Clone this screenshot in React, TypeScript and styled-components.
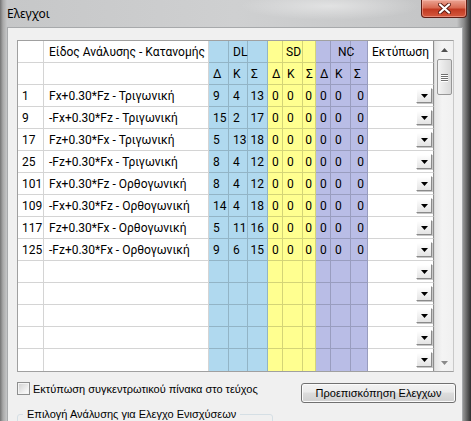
import React from 'react';
import styled, { createGlobalStyle } from 'styled-components';

const GlobalStyle = createGlobalStyle`
  html, body {
    margin: 0;
    padding: 0;
    overflow: hidden;
  }
  * {
    box-sizing: border-box;
  }
`;

const titleFont = `"Noto Sans", "Open Sans", sans-serif`;
const gridFont = `Roboto, "Noto Sans", sans-serif`;
const smallFont = `"Liberation Sans", Arial, sans-serif`;

const fills: Record<string, string> = {
  dl: '#b0d9ef',
  sd: '#ffff90',
  nc: '#b9bde6',
};

const Window = styled.div`
  width: 471px;
  height: 421px;
  display: flex;
  flex-direction: column;
  overflow: hidden;
  background:
    radial-gradient(ellipse 90px 14px at 330px 6px, rgba(255, 255, 255, 0.45), rgba(255, 255, 255, 0)),
    linear-gradient(90deg, #747474 0, #a9a9a9 3px, #c6c7c8 7px, #cfd0d1 50%, #c3c4c5 97%, #8a8a8a 98.5%, #2e2e2e 100%);
`;

const TitleBar = styled.div`
  height: 27px;
  display: flex;
  justify-content: space-between;
  align-items: flex-start;
  padding-left: 7px;
`;

const Title = styled.span`
  font-family: ${titleFont};
  font-size: 12px;
  line-height: 27px;
  color: #000;
`;

const CloseButton = styled.div`
  width: 46px;
  height: 18px;
  margin-right: 4px;
  display: flex;
  align-items: center;
  justify-content: center;
  border: 1px solid #5e1d14;
  border-top: none;
  border-radius: 0 0 4px 4px;
  background: linear-gradient(#eba493 0%, #d96b53 45%, #c23a22 55%, #d5593d 100%);
  box-shadow: inset 0 0 0 1px rgba(255, 200, 190, 0.45);
`;

const Client = styled.div`
  flex: 1;
  margin: 0 8px 0 7px;
  background: #f0f0f0;
  border: 1px solid #a7a9ab;
  border-bottom: none;
  padding: 12px 6px 0 9px;
  display: flex;
  flex-direction: column;
`;

const GridFrame = styled.div`
  display: flex;
  width: 437px;
  border: 1px solid #a0a0a0;
  border-right-color: #c9c9c9;
  background: #fff;
`;

const Table = styled.div`
  display: grid;
  grid-template-columns: 26px 165px 20px 19px 20px 15px 20px 13px 15px 20px 17px 66px;
  grid-auto-rows: 22px;
`;

const Cell = styled.div<{
  $fill?: string;
  $align?: 'left' | 'right';
  $pad?: number;
  $edge?: boolean;
  $last?: boolean;
  $raise?: boolean;
}>`
  position: relative;
  z-index: ${(p) => (p.$raise ? 1 : 'auto')};
  display: flex;
  align-items: center;
  justify-content: ${(p) => (p.$align === 'right' ? 'flex-end' : 'flex-start')};
  padding: 0 ${(p) => (p.$align === 'right' ? 3 : 0)}px 0 ${(p) => p.$pad ?? 4}px;
  background: ${(p) => (p.$fill ? fills[p.$fill] : '#fff')};
  border-right: 1px solid ${(p) => (p.$edge ? '#8e8e8e' : 'rgba(0, 0, 0, 0.17)')};
  border-bottom: ${(p) => (p.$last ? 'none' : '1px solid rgba(0, 0, 0, 0.17)')};
  font-family: ${gridFont};
  font-size: 12px;
  color: #000;
  white-space: nowrap;
`;

const DropButton = styled.div`
  position: absolute;
  right: 1px;
  top: 3px;
  width: 16px;
  height: 15px;
  display: flex;
  align-items: center;
  justify-content: center;
  background: linear-gradient(#ffffff, #e4e4e4);
  border: 1px solid;
  border-color: #ffffff #8a8a8a #8a8a8a #ffffff;
  box-shadow: 1px 1px 0 #c8c8c8;
`;

const ScrollBar = styled.div`
  width: 19px;
  display: flex;
  flex-direction: column;
  align-items: center;
  background: linear-gradient(90deg, #e6e6e6, #f4f4f4 40%, #f0f0f0);
  border-left: 1px solid #d9d9d9;
`;

const ArrowSlot = styled.div`
  height: 17px;
  width: 100%;
  display: flex;
  align-items: center;
  justify-content: center;
`;

const Thumb = styled.div`
  width: 15px;
  height: 36px;
  margin-top: 1px;
  display: flex;
  flex-direction: column;
  align-items: center;
  justify-content: center;
  gap: 1px;
  border: 1px solid #979797;
  border-radius: 2px;
  background: linear-gradient(90deg, #f4f4f4, #e6e6e6 50%, #d9d9d9);
`;

const Grip = styled.div`
  width: 7px;
  height: 1px;
  background: #6f6f6f;
  box-shadow: 0 1px 0 #fff;
`;

const Spacer = styled.div`
  flex: 1;
`;

const BottomRow = styled.div`
  display: flex;
  justify-content: space-between;
  align-items: flex-start;
  margin-top: 11px;
`;

const CheckLabel = styled.label`
  display: flex;
  align-items: center;
  gap: 3px;
  margin-top: -1px;
  font-family: ${smallFont};
  font-size: 11px;
  color: #000;
`;

const CheckBox = styled.span`
  width: 13px;
  height: 13px;
  border: 1px solid #8e8f8f;
  background: linear-gradient(135deg, #cfcfcf, #f2f2f2 70%, #ffffff);
  box-shadow: inset 0 0 0 1px #f4f4f4;
`;

const PreviewButton = styled.button`
  width: 155px;
  height: 20px;
  padding: 0;
  border: 1px solid #707070;
  border-radius: 3px;
  background: linear-gradient(#f2f2f2 0%, #ebebeb 45%, #dddddd 50%, #cfcfcf 100%);
  box-shadow: inset 0 0 0 1px #fbfbfb;
  font-family: ${smallFont};
  font-size: 11px;
  color: #000;
`;

const GroupBox = styled.fieldset`
  width: 256px;
  height: 40px;
  margin: 5px 0 0 0;
  padding: 0;
  border: 1px solid #d5dfe5;
  border-radius: 3px;
`;

const GroupCaption = styled.legend`
  margin-left: 5px;
  padding: 0 4px;
  font-family: ${smallFont};
  font-size: 11px;
  color: #000;
`;

type Row = [string, string, number[]];

const rows: Row[] = [
  ['1', 'Fx+0.30*Fz - Τριγωνική', [9, 4, 13, 0, 0, 0, 0, 0, 0]],
  ['9', '-Fx+0.30*Fz - Τριγωνική', [15, 2, 17, 0, 0, 0, 0, 0, 0]],
  ['17', 'Fz+0.30*Fx - Τριγωνική', [5, 13, 18, 0, 0, 0, 0, 0, 0]],
  ['25', '-Fz+0.30*Fx - Τριγωνική', [8, 4, 12, 0, 0, 0, 0, 0, 0]],
  ['101', 'Fx+0.30*Fz - Ορθογωνική', [8, 4, 12, 0, 0, 0, 0, 0, 0]],
  ['109', '-Fx+0.30*Fz - Ορθογωνική', [14, 4, 18, 0, 0, 0, 0, 0, 0]],
  ['117', 'Fz+0.30*Fx - Ορθογωνική', [5, 11, 16, 0, 0, 0, 0, 0, 0]],
  ['125', '-Fz+0.30*Fx - Ορθογωνική', [9, 6, 15, 0, 0, 0, 0, 0, 0]],
];

const groups = [
  { key: 'dl', label: 'DL', labelPad: 4 },
  { key: 'sd', label: 'SD', labelPad: 3 },
  { key: 'nc', label: 'NC', labelPad: 7 },
];

const subHeads = ['Δ', 'Κ', 'Σ'];

const DownTriangle = ({ color = '#000' }: { color?: string }) => (
  <svg width="7" height="4" viewBox="0 0 7 4">
    <path d="M0 0H7L3.5 4Z" fill={color} />
  </svg>
);

const UpTriangle = ({ color }: { color: string }) => (
  <svg width="7" height="4" viewBox="0 0 7 4">
    <path d="M0 4H7L3.5 0Z" fill={color} />
  </svg>
);

const CloseGlyph = () => (
  <svg width="13" height="11" viewBox="0 0 13 11">
    <path d="M2 1.5L11 9.5M11 1.5L2 9.5" stroke="#5b1a10" strokeWidth="4" strokeLinecap="round" />
    <path d="M2 1.5L11 9.5M11 1.5L2 9.5" stroke="#fff" strokeWidth="2.3" strokeLinecap="round" />
  </svg>
);

const ValueCells = ({ values, last }: { values: (number | string)[]; last?: boolean }) => (
  <>
    {groups.map((g, gi) =>
      subHeads.map((_, si) => (
        <Cell
          key={g.key + si}
          $fill={g.key}
          $align={si === 2 ? 'right' : 'left'}
          $pad={si === 2 ? 0 : 4}
          $last={last}
        >
          {values[gi * 3 + si]}
        </Cell>
      ))
    )}
  </>
);

const App: React.FC = () => {
  const emptyRows = 5;

  return (
    <Window>
      <GlobalStyle />
      <TitleBar>
        <Title>Ελεγχοι</Title>
        <CloseButton>
          <CloseGlyph />
        </CloseButton>
      </TitleBar>
      <Client>
        <GridFrame>
          <Table>
            {/* header row 1 */}
            <Cell />
            <Cell $pad={5}>Είδος Ανάλυσης - Κατανομής</Cell>
            {groups.map((g) =>
              subHeads.map((_, si) => (
                <Cell
                  key={g.key + 'h' + si}
                  $fill={g.key}
                  $raise={si === 1}
                  $pad={si === 1 ? g.labelPad : 4}
                >
                  {si === 1 ? g.label : ''}
                </Cell>
              ))
            )}
            <Cell $edge>Εκτύπωση</Cell>

            {/* header row 2 */}
            <Cell />
            <Cell />
            {groups.map((g) =>
              subHeads.map((s, si) => (
                <Cell key={g.key + 's' + si} $fill={g.key} $pad={si === 2 ? 3 : 4}>
                  {s}
                </Cell>
              ))
            )}
            <Cell $edge />

            {rows.map(([id, name, values]) => (
              <React.Fragment key={id}>
                <Cell>{id}</Cell>
                <Cell $pad={5}>{name}</Cell>
                <ValueCells values={values} />
                <Cell $edge>
                  <DropButton>
                    <DownTriangle />
                  </DropButton>
                </Cell>
              </React.Fragment>
            ))}

            {Array.from({ length: emptyRows }).map((_, i) => {
              const last = i === emptyRows - 1;
              return (
                <React.Fragment key={'e' + i}>
                  <Cell $last={last} />
                  <Cell $last={last} />
                  <ValueCells values={[]} last={last} />
                  <Cell $edge $last={last}>
                    <DropButton>
                      <DownTriangle />
                    </DropButton>
                  </Cell>
                </React.Fragment>
              );
            })}
          </Table>
          <ScrollBar>
            <ArrowSlot>
              <UpTriangle color="#505050" />
            </ArrowSlot>
            <Thumb>
              <Grip />
              <Grip />
              <Grip />
              <Grip />
            </Thumb>
            <Spacer />
            <ArrowSlot>
              <DownTriangle color="#8a8a8a" />
            </ArrowSlot>
          </ScrollBar>
        </GridFrame>

        <BottomRow>
          <CheckLabel>
            <CheckBox />
            Εκτύπωση συγκεντρωτικού πίνακα στο τεύχος
          </CheckLabel>
          <PreviewButton>Προεπισκόπηση Ελεγχων</PreviewButton>
        </BottomRow>

        <GroupBox>
          <GroupCaption>Επιλογή Ανάλυσης για Ελεγχο Ενισχύσεων</GroupCaption>
        </GroupBox>
      </Client>
    </Window>
  );
};

export default App;
